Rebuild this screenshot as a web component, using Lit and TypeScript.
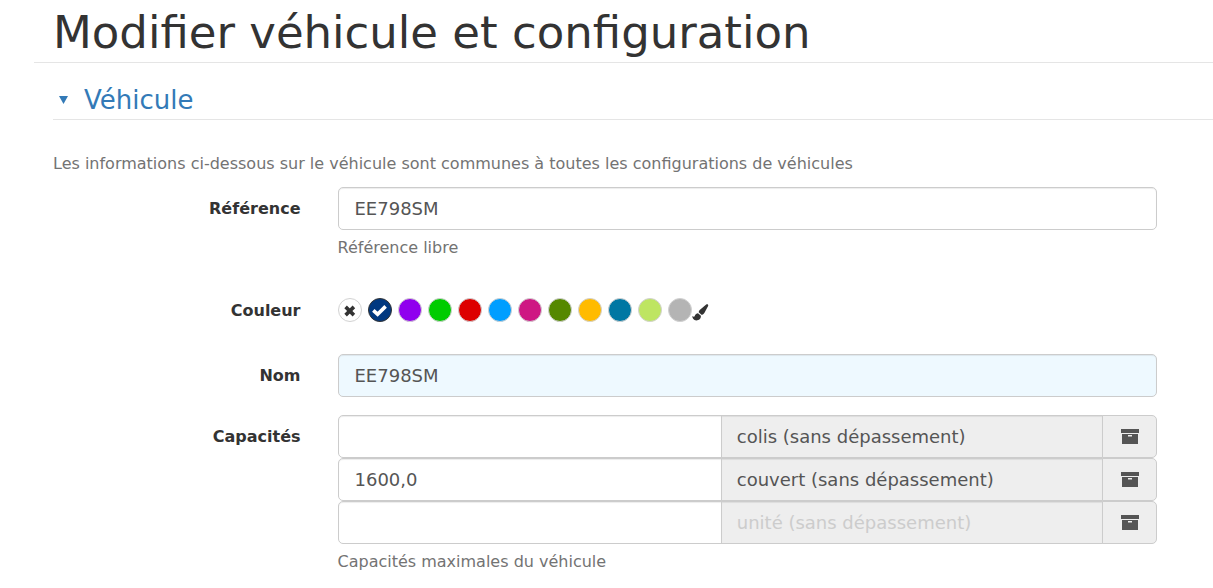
import { LitElement, html, css, svg } from "lit";
import { customElement, state } from "lit/decorators.js";

interface Swatch {
  name: string;
  color: string;
}

interface Capacity {
  id: string;
  value: string;
  unit: string;
  muted: boolean;
}

const SWATCHES: Swatch[] = [
  { name: "Aucune couleur", color: "#ffffff" },
  { name: "Bleu foncé", color: "#003880" },
  { name: "Violet", color: "#9000ee" },
  { name: "Vert", color: "#00cc00" },
  { name: "Rouge", color: "#dd0000" },
  { name: "Bleu clair", color: "#009eff" },
  { name: "Rose", color: "#ce1783" },
  { name: "Vert olive", color: "#558800" },
  { name: "Orange", color: "#ffbb00" },
  { name: "Bleu canard", color: "#0077a3" },
  { name: "Vert clair", color: "#bee562" },
  { name: "Gris", color: "#b4b4b4" },
];

const CAPACITIES: Capacity[] = [
  { id: "colis", value: "", unit: "colis (sans dépassement)", muted: false },
  { id: "couvert", value: "1600,0", unit: "couvert (sans dépassement)", muted: false },
  { id: "unite", value: "", unit: "unité (sans dépassement)", muted: true },
];

const crossIcon = svg`<path d="M7.6 8.900 15.900 17.100M15.900 8.900 7.600 17.100" fill="none" stroke="#333" stroke-width="3.600"/>`;
const checkIcon = svg`<path d="M5.300 12.400 9.600 16.200 17.600 8.400" fill="none" stroke="#fff" stroke-width="3.600"/>`;

@customElement("app-root")
export class AppRoot extends LitElement {
  @state() private selected = 1;

  static styles = css`
    :host {
      display: block;
      min-height: 100vh;
      background: #fff;
      color: #333;
      font: 16px/24px Verdana, "DejaVu Sans", sans-serif;
    }
    * {
      box-sizing: border-box;
    }
    main {
      padding: 4px 0 16px 34px;
    }
    h1 {
      margin: 0;
      padding: 0 19px;
      font-size: 45px;
      line-height: 58px;
      font-weight: 400;
      border-bottom: 1px solid #e5e5e5;
    }
    .legend {
      margin: 20px 0 0 19px;
      padding: 0 0 2px;
      font-size: 26px;
      line-height: 34px;
      font-weight: 400;
      border-bottom: 1px solid #e5e5e5;
    }
    .legend a {
      display: flex;
      align-items: center;
      gap: 16px;
      padding-left: 6px;
      color: #337ab7;
      text-decoration: none;
    }
    .caret {
      width: 9px;
      height: 8px;
      fill: #337ab7;
    }
    .intro {
      margin: 32px 19px 11px;
    }
    .intro,
    .help {
      color: #737373;
    }
    .row {
      display: grid;
      grid-template-columns: 1fr 3fr;
      margin-right: 37px;
    }
    .row + .row {
      margin-top: 18px;
    }
    .name {
      padding: 10px 19px 0;
      font-weight: 700;
      text-align: right;
    }
    .field {
      min-width: 0;
      padding: 0 19px 0 18px;
    }
    .help {
      margin: 6px 0 11px;
    }
    .text,
    .unit,
    .box {
      height: 43px;
      margin: 0;
      border: 1px solid #ccc;
      color: #555;
      font: 18px/25px Verdana, "DejaVu Sans", sans-serif;
      outline: 0;
    }
    .text {
      display: block;
      width: 100%;
      padding: 8px 16px;
      border-radius: 5px;
      background: #fff;
      box-shadow: inset 0 1px 1px rgba(0, 0, 0, 0.075);
    }
    .text.filled {
      background: #eef9ff;
    }
    .group {
      display: flex;
    }
    .group .text {
      flex: 1 1 0;
      min-width: 0;
      border-radius: 5px 0 0 5px;
    }
    .unit {
      flex: 1 1 0;
      min-width: 0;
      margin-left: -1px;
      padding: 8px 15px;
      border-radius: 0;
      appearance: none;
      background: #eee;
      box-shadow: inset 0 1px 1px rgba(0, 0, 0, 0.075);
    }
    .unit.muted {
      color: #ccc;
    }
    .box {
      display: grid;
      place-items: center;
      width: 55px;
      margin-left: -1px;
      padding: 0;
      border-radius: 0 5px 5px 0;
      background: #eee;
    }
    .box svg {
      width: 18px;
      height: 15px;
    }
    .colors {
      display: flex;
      align-items: center;
      height: 47px;
      padding-bottom: 5px;
    }
    .swatch {
      display: grid;
      width: 24px;
      height: 24px;
      margin-right: 6px;
    }
    .swatch:last-of-type {
      margin-right: 0;
    }
    .swatch input,
    .swatch svg {
      grid-area: 1 / 1;
      width: 24px;
      height: 24px;
      margin: 0;
    }
    .swatch input {
      appearance: none;
      border: 1px solid #d2d2d2;
      border-radius: 50%;
    }
    .swatch input:checked {
      border-color: #333;
    }
    .swatch svg {
      pointer-events: none;
    }
    .brush {
      display: block;
      padding: 4px 0 0;
      border: 0;
      background: none;
    }
    .brush svg {
      display: block;
      width: 17px;
      height: 17px;
    }
  `;

  private renderSwatch(s: Swatch, i: number) {
    const on = i === this.selected;
    return html`<label class="swatch">
      <input
        type="radio"
        name="couleur"
        aria-label=${s.name}
        style="background:${s.color}"
        .checked=${on}
        @change=${() => (this.selected = i)}
      />
      <svg viewBox="0 0 24 24" aria-hidden="true">${on ? checkIcon : i === 0 ? crossIcon : null}</svg>
    </label>`;
  }

  private renderCapacity(c: Capacity) {
    return html`<div class="group">
      <input class="text" id="cap-${c.id}" type="text" aria-label="Capacité ${c.id}" .value=${c.value} />
      <select class="unit ${c.muted ? "muted" : ""}" aria-label="Unité ${c.id}">
        <option>${c.unit}</option>
      </select>
      <button class="box" type="button" aria-label="Contenant ${c.id}">
        <svg viewBox="0 0 18 15" fill="#555" aria-hidden="true">
          <path d="M0 0h18v4H0z" />
          <path fill-rule="evenodd" d="M1 5h16v10H1zM7 6v1.600h4V6z" />
        </svg>
      </button>
    </div>`;
  }

  render() {
    return html`<main>
      <h1>Modifier véhicule et configuration</h1>
      <form @submit=${(e: Event) => e.preventDefault()}>
        <h2 class="legend">
          <a href="#vehicule">
            <svg class="caret" viewBox="0 0 9 8" aria-hidden="true"><path d="M0 0h9L4.5 8z" /></svg>
            Véhicule
          </a>
        </h2>
        <p class="intro">
          Les informations ci-dessous sur le véhicule sont communes à toutes les configurations de véhicules
        </p>
        <div class="row">
          <label class="name" for="reference">Référence</label>
          <div class="field">
            <input class="text" id="reference" type="text" value="EE798SM" />
            <p class="help">Référence libre</p>
          </div>
        </div>
        <div class="row" role="radiogroup" aria-labelledby="couleur">
          <div class="name" id="couleur">Couleur</div>
          <div class="field colors">
            ${SWATCHES.map((s, i) => this.renderSwatch(s, i))}
            <button class="brush" type="button" aria-label="Couleur personnalisée">
              <svg viewBox="0 0 17 17" fill="#333" aria-hidden="true">
                <path d="M14.200.5c1.200-.8 2.500.1 1.900 1.400L12.500 8.700c-.6 1.200-1.800 2-3.100 2.100L6.700 8.300c.1-1.300.7-2.100 1.600-2.900z" />
                <path d="M6 9.200l2.900 2.600c.2 3-1.900 4.600-4.600 4.600-2.700 0-3.900-1.900-4-4.300.6.4 1.300.9 1.800.7.9-.4.700-3 3.900-3.600z" />
              </svg>
            </button>
          </div>
        </div>
        <div class="row">
          <label class="name" for="nom">Nom</label>
          <div class="field">
            <input class="text filled" id="nom" type="text" value="EE798SM" />
          </div>
        </div>
        <div class="row">
          <label class="name" for="cap-colis">Capacités</label>
          <div class="field">
            ${CAPACITIES.map((c) => this.renderCapacity(c))}
            <p class="help">Capacités maximales du véhicule</p>
          </div>
        </div>
      </form>
    </main>`;
  }
}
